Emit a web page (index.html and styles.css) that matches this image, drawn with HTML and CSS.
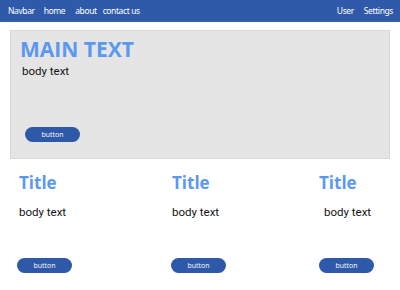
FILE: index.html
```html
<!DOCTYPE html>
<html>
<head>
<meta charset="utf-8">
<link rel="stylesheet" href="styles.css">
</head>
<body>
<nav class="nav">
  <div class="nav-left">
    <span class="brand">Navbar</span>
    <span class="link home">home</span>
    <span class="link about">about</span>
    <span class="link">contact us</span>
  </div>
  <div class="nav-right">
    <span class="link">User</span>
    <span class="link">Settings</span>
  </div>
</nav>
<main class="main">
  <section class="hero">
    <h1 class="hero-title">MAIN TEXT</h1>
    <p class="hero-body">body text</p>
    <button class="btn hero-btn">button</button>
  </section>
  <section class="cards">
    <div class="card c1">
      <h2 class="card-title">Title</h2>
      <p class="card-body">body text</p>
      <button class="btn">button</button>
    </div>
    <div class="card c2">
      <h2 class="card-title">Title</h2>
      <p class="card-body">body text</p>
      <button class="btn">button</button>
    </div>
    <div class="card c3">
      <h2 class="card-title">Title</h2>
      <p class="card-body shift">body text</p>
      <button class="btn">button</button>
    </div>
  </section>
</main>
</body>
</html>
```
FILE: styles.css
```css
html, body {
  margin: 0;
  padding: 0;
  background: #ffffff;
}
body {
  width: 400px;
  height: 290px;
  overflow: hidden;
  font-family: "Open Sans", "Noto Sans", sans-serif;
}
.nav {
  height: 21px;
  background: #2f5aa9;
  display: flex;
  align-items: center;
  justify-content: space-between;
  padding: 0 7px 0 8px;
  color: #ffffff;
  font-family: "Noto Sans", sans-serif;
  font-size: 8.5px;
  letter-spacing: -0.4px;
  border-bottom: 1px solid #3a62ad;
}
.nav-left, .nav-right {
  display: flex;
  align-items: center;
}
.nav-left .home {
  margin-left: 9px;
}
.nav-left .about {
  margin-left: 10px;
}
.nav-left span:last-child {
  margin-left: 6px;
}
.nav-right {
  gap: 10px;
}
.main {
  padding: 8px 10px 0;
}
.hero {
  height: 129px;
  box-sizing: border-box;
  background: #e5e5e5;
  border: 1px solid #d9d9d9;
  padding: 5px 0 0 9px;
  display: flex;
  flex-direction: column;
  align-items: flex-start;
}
.hero-title {
  margin: 0;
  font-family: "Open Sans", sans-serif;
  font-weight: 700;
  font-size: 21px;
  line-height: 26px;
  color: #5b98ef;
}
.hero-body {
  margin: 2px 0 0 2px;
  font-family: Roboto, sans-serif;
  font-size: 11.5px;
  line-height: 15px;
  color: #111111;
}
.hero-btn {
  margin: auto 0 16px 5px;
}
.btn {
  width: 55px;
  height: 15px;
  border: none;
  border-radius: 8px;
  background: #2e59a8;
  color: #ffffff;
  font-family: "Open Sans", sans-serif;
  font-size: 7px;
  padding: 0;
  line-height: 15px;
}
.cards {
  display: grid;
  grid-template-columns: 155px 147px 1fr;
  padding: 13px 0 0 7px;
  height: 101px;
}
.card {
  display: flex;
  flex-direction: column;
  align-items: flex-start;
}
.card-title {
  margin: 0 0 0 2px;
  font-family: "Open Sans", sans-serif;
  font-weight: 700;
  font-size: 17px;
  line-height: 22px;
  color: #5b98ef;
}
.c2 .card-title, .c3 .card-title {
  margin-left: 0;
}
.card-body {
  margin: 11px 0 0 2px;
  font-family: Roboto, sans-serif;
  font-size: 11.5px;
  line-height: 15px;
  color: #111111;
}
.c2 .card-body {
  margin-left: 0;
}
.card-body.shift {
  margin-left: 5px;
}
.card .btn {
  margin-top: auto;
}
.c2 .btn {
  margin-left: -1px;
}
```
